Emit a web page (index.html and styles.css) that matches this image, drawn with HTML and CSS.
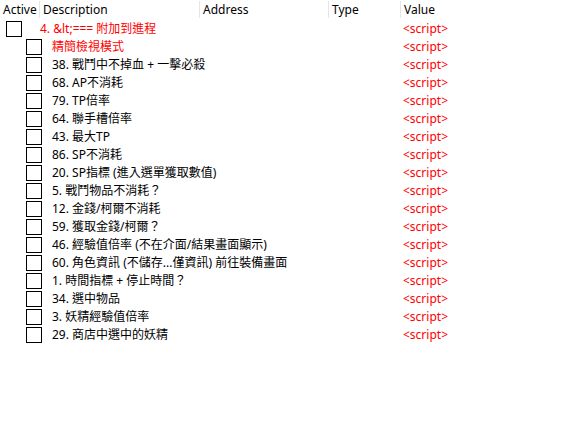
FILE: index.html
```html
<!DOCTYPE html>
<html>
<head>
<meta charset="utf-8">
<link rel="stylesheet" href="styles.css">
</head>
<body>
<div class="table">
  <div class="header">
    <div class="col col-active">Active</div>
    <div class="col col-desc">Description</div>
    <div class="col col-addr">Address</div>
    <div class="col col-type">Type</div>
    <div class="col col-value">Value</div>
  </div>
  <div class="rows">
    <div class="row top red"><div class="desc"><span class="box"></span><span class="text">4. &amp;lt;=== 附加到進程</span></div><div class="value">&lt;script&gt;</div></div>
    <div class="row child red"><div class="desc"><span class="box"></span><span class="text">精簡檢視模式</span></div><div class="value">&lt;script&gt;</div></div>
    <div class="row child"><div class="desc"><span class="box"></span><span class="text">38. 戰鬥中不掉血 + 一擊必殺</span></div><div class="value">&lt;script&gt;</div></div>
    <div class="row child"><div class="desc"><span class="box"></span><span class="text">68. AP不消耗</span></div><div class="value">&lt;script&gt;</div></div>
    <div class="row child"><div class="desc"><span class="box"></span><span class="text">79. TP倍率</span></div><div class="value">&lt;script&gt;</div></div>
    <div class="row child"><div class="desc"><span class="box"></span><span class="text">64. 聯手槽倍率</span></div><div class="value">&lt;script&gt;</div></div>
    <div class="row child"><div class="desc"><span class="box"></span><span class="text">43. 最大TP</span></div><div class="value">&lt;script&gt;</div></div>
    <div class="row child"><div class="desc"><span class="box"></span><span class="text">86. SP不消耗</span></div><div class="value">&lt;script&gt;</div></div>
    <div class="row child"><div class="desc"><span class="box"></span><span class="text">20. SP指標 (進入選單獲取數值)</span></div><div class="value">&lt;script&gt;</div></div>
    <div class="row child"><div class="desc"><span class="box"></span><span class="text">5. 戰鬥物品不消耗？</span></div><div class="value">&lt;script&gt;</div></div>
    <div class="row child"><div class="desc"><span class="box"></span><span class="text">12. 金錢/柯爾不消耗</span></div><div class="value">&lt;script&gt;</div></div>
    <div class="row child"><div class="desc"><span class="box"></span><span class="text">59. 獲取金錢/柯爾？</span></div><div class="value">&lt;script&gt;</div></div>
    <div class="row child"><div class="desc"><span class="box"></span><span class="text">46. 經驗值倍率 (不在介面/結果畫面顯示)</span></div><div class="value">&lt;script&gt;</div></div>
    <div class="row child"><div class="desc"><span class="box"></span><span class="text">60. 角色資訊 (不儲存...僅資訊) 前往裝備畫面</span></div><div class="value">&lt;script&gt;</div></div>
    <div class="row child"><div class="desc"><span class="box"></span><span class="text">1. 時間指標 + 停止時間？</span></div><div class="value">&lt;script&gt;</div></div>
    <div class="row child"><div class="desc"><span class="box"></span><span class="text">34. 選中物品</span></div><div class="value">&lt;script&gt;</div></div>
    <div class="row child"><div class="desc"><span class="box"></span><span class="text">3. 妖精經驗值倍率</span></div><div class="value">&lt;script&gt;</div></div>
    <div class="row child"><div class="desc"><span class="box"></span><span class="text">29. 商店中選中的妖精</span></div><div class="value">&lt;script&gt;</div></div>
  </div>
</div>
</body>
</html>
```
FILE: styles.css
```css
html, body {
  margin: 0;
  padding: 0;
  background: #ffffff;
}
body {
  font-family: "Segoe UI", "Noto Sans", "Noto Sans CJK TC", sans-serif;
  font-size: 12px;
  color: #000000;
  width: 575px;
  height: 422px;
  overflow: hidden;
}
.header {
  display: flex;
  height: 20px;
  align-items: stretch;
}
.col {
  line-height: 20px;
  padding-left: 3px;
  box-sizing: border-box;
  white-space: nowrap;
  overflow: hidden;
}
.col + .col {
  border-left: 1px solid #e5e5e5;
  margin-top: 1px;
  line-height: 18px;
  height: 17px;
}
.col-active { width: 39px; }
.col-desc { width: 160px; }
.col-addr { width: 129px; }
.col-type { width: 72px; }
.col-value { flex: 1; }
.row {
  display: flex;
  height: 18px;
  align-items: center;
}
.desc {
  width: 403px;
  display: flex;
  align-items: center;
  white-space: nowrap;
}
.box {
  width: 16px;
  height: 16px;
  box-sizing: border-box;
  border: 1px solid #000000;
  background: #ffffff;
  flex: none;
}
.top .box { margin-left: 6px; margin-right: 18px; }
.child .box { margin-left: 26px; margin-right: 10px; }
.text {
  line-height: 18px;
}
.red .text { color: #ff0000; }
.value {
  color: #ff0000;
  line-height: 18px;
}
```
